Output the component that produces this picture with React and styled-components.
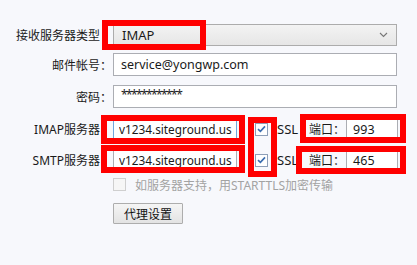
import React from "react";
import styled, { createGlobalStyle } from "styled-components";

const GlobalStyle = createGlobalStyle`
  html, body {
    margin: 0;
    padding: 0;
    background: #f7f8fc;
  }
  body {
    font-family: "Noto Sans", "Noto Sans CJK SC", sans-serif;
    font-size: 12px;
    color: #1a1a1a;
  }
`;

const Form = styled.div`
  width: 417px;
  height: 265px;
  display: flex;
  flex-direction: column;
  padding-top: 24px;
  box-sizing: border-box;
`;

const Row = styled.div`
  display: flex;
  align-items: center;
  height: ${(p) => p.$h}px;
  margin-top: ${(p) => p.$gap || 0}px;
`;

const Label = styled.div`
  width: 113px;
  flex: none;
  box-sizing: border-box;
  text-align: right;
  padding-right: ${(p) => (p.$colon ? 1 : 13)}px;
  font-family: "Noto Sans", "Noto Sans CJK SC", sans-serif;
  font-size: 12px;
  white-space: nowrap;
`;

const Box = styled.div`
  position: relative;
  height: 100%;
  box-sizing: border-box;
  display: flex;
  align-items: center;
  flex: none;
`;

const Select = styled(Box)`
  width: 284px;
  border: 1px solid #acacac;
  background: linear-gradient(#f3f3f3, #e6e6e6);
  padding: 0 8px;
  justify-content: space-between;
  font-size: 13px;
`;

const Input = styled(Box)`
  width: ${(p) => p.$w}px;
  border: 1px solid ${(p) => (p.$focus ? "#6fa6de" : "#abadb3")};
  background: #fff;
  padding-left: ${(p) => p.$pad ?? 7}px;
  font-size: 12.5px;
  white-space: nowrap;
`;

const Clip = styled.span`
  display: block;
  overflow: hidden;
  margin-left: -2px;
  font-size: 11.8px;
`;

const Stars = styled.span`
  letter-spacing: -1.6px;
  font-size: 12px;
  transform: translateY(-2px);
`;

const Mark = styled.span`
  position: absolute;
  left: ${(p) => p.$l}px;
  top: ${(p) => p.$t}px;
  width: ${(p) => p.$w}px;
  height: ${(p) => p.$h}px;
  border: 6px solid #ff0000;
  box-sizing: border-box;
  pointer-events: none;
  z-index: 2;
`;

const CheckWrap = styled.span`
  position: relative;
  width: 13px;
  height: 13px;
  flex: none;
  margin-left: ${(p) => p.$ml || 0}px;
  box-sizing: border-box;
  border: 1px solid ${(p) => (p.$disabled ? "#cfcfcf" : "#8e9fb8")};
  background: ${(p) => (p.$disabled ? "#f6f6f6" : "#fff")};
  display: flex;
  align-items: center;
  justify-content: center;
`;

const Ssl = styled.span`
  margin-left: 9px;
  font-size: 13px;
`;

const PortGroup = styled.div`
  position: relative;
  display: flex;
  align-items: center;
  height: 100%;
  margin-left: 11px;
`;

const PortLabel = styled.span`
  width: 37px;
  font-size: 12px;
`;

const Hint = styled.span`
  margin-left: 9px;
  color: #a3a3a3;
  font-size: 12px;
`;

const Button = styled.button`
  margin-left: 113px;
  width: 70px;
  height: 21px;
  border: 1px solid #adadad;
  background: linear-gradient(#f5f5f5, #e3e3e3);
  font-family: "Noto Sans CJK SC", sans-serif;
  font-size: 12px;
  color: #111;
  padding: 0;
  border-radius: 1px;
`;

const Check = ({ checked, disabled, ml, children }) => (
  <CheckWrap $disabled={disabled} $ml={ml}>
    {checked && (
      <svg width="9" height="8" viewBox="0 0 9 8">
        <path d="M1 4.2 L3.4 6.4 L8 1.4" fill="none" stroke="#3a6db0" strokeWidth="1.6" />
      </svg>
    )}
    {children}
  </CheckWrap>
);

const Chevron = () => (
  <svg width="9" height="6" viewBox="0 0 9 6">
    <path d="M1 1 L4.5 4.5 L8 1" fill="none" stroke="#777" strokeWidth="1.1" />
  </svg>
);

export default function App() {
  return (
    <>
      <GlobalStyle />
      <Form>
        <Row $h={22}>
          <Label>接收服务器类型</Label>
          <Select>
            <span>IMAP</span>
            <Chevron />
            <Mark $l={-12} $t={-5} $w={104} $h={30} />
          </Select>
        </Row>

        <Row $h={23} $gap={7}>
          <Label $colon>邮件帐号：</Label>
          <Input $w={284}>service@yongwp.com</Input>
        </Row>

        <Row $h={23} $gap={9}>
          <Label $colon>密码：</Label>
          <Input $w={284}>
            <Stars>************</Stars>
          </Input>
        </Row>

        <Row $h={20} $gap={11}>
          <Label>IMAP服务器</Label>
          <Input $w={124} $focus>
            <Clip>v1234.siteground.us</Clip>
            <Mark $l={-13} $t={-5} $w={144} $h={29} />
          </Input>
          <Check checked ml={18}>
            <Mark $l={-8} $t={-7} $w={29} $h={60} />
          </Check>
          <Ssl>SSL</Ssl>
          <PortGroup>
            <PortLabel>端口：</PortLabel>
            <Input $w={52} $pad={6}>993</Input>
            <Mark $l={-9} $t={-5} $w={106} $h={29} />
          </PortGroup>
        </Row>

        <Row $h={20} $gap={11}>
          <Label>SMTP服务器</Label>
          <Input $w={124}>
            <Clip>v1234.siteground.us</Clip>
            <Mark $l={-13} $t={-6} $w={144} $h={28} />
          </Input>
          <Check checked ml={18} />
          <Ssl>SSL</Ssl>
          <PortGroup>
            <PortLabel>端口：</PortLabel>
            <Input $w={52} $pad={6}>465</Input>
            <Mark $l={-13} $t={-4} $w={110} $h={28} />
          </PortGroup>
        </Row>

        <Row $h={13} $gap={8}>
          <Label />
          <Check disabled />
          <Hint>如服务器支持，用STARTTLS加密传输</Hint>
        </Row>

        <Row $h={21} $gap={12}>
          <Button>代理设置</Button>
        </Row>
      </Form>
    </>
  );
}
